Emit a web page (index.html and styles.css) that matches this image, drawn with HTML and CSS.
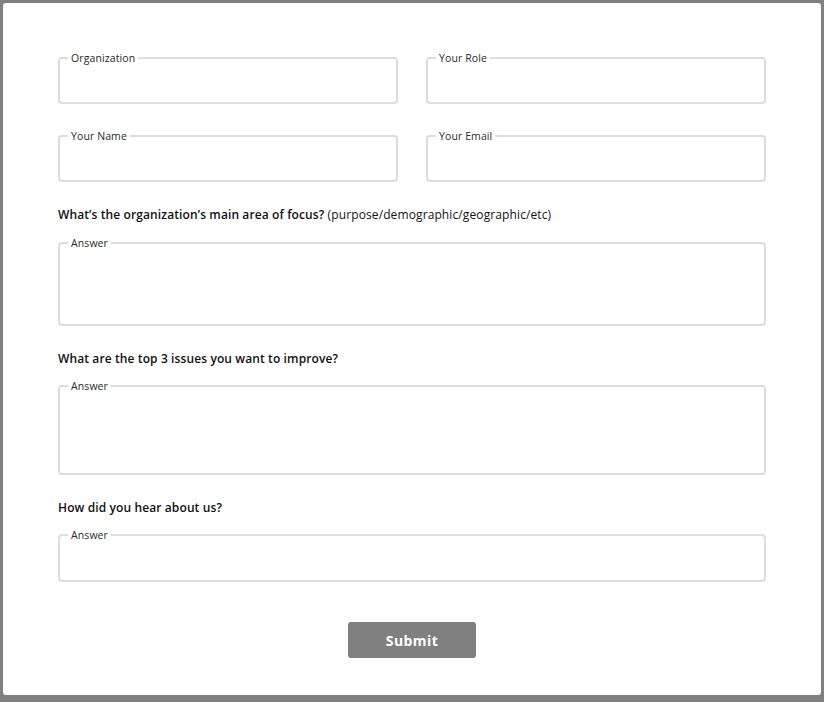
FILE: index.html
```html
<!DOCTYPE html>
<html lang="en">
<head>
<meta charset="utf-8">
<title>Contact form</title>
<link rel="stylesheet" href="styles.css">
</head>
<body>
<form class="card">
  <div class="row">
    <fieldset class="field field-short">
      <legend>Organization</legend>
      <div class="field-body"></div>
    </fieldset>
    <fieldset class="field field-short">
      <legend>Your Role</legend>
      <div class="field-body"></div>
    </fieldset>
  </div>
  <div class="row row-second">
    <fieldset class="field field-short">
      <legend>Your Name</legend>
      <div class="field-body"></div>
    </fieldset>
    <fieldset class="field field-short">
      <legend>Your Email</legend>
      <div class="field-body"></div>
    </fieldset>
  </div>

  <p class="question q-first"><strong>What’s the organization’s main area of focus?</strong> (purpose/demographic/geographic/etc)</p>
  <fieldset class="field">
    <legend>Answer</legend>
    <div class="field-body body-tall"></div>
  </fieldset>

  <p class="question"><strong>What are the top 3 issues you want to improve?</strong></p>
  <fieldset class="field">
    <legend>Answer</legend>
    <div class="field-body body-taller"></div>
  </fieldset>

  <p class="question"><strong>How did you hear about us?</strong></p>
  <fieldset class="field">
    <legend>Answer</legend>
    <div class="field-body body-last"></div>
  </fieldset>

  <div class="actions">
    <button type="button" class="submit">Submit</button>
  </div>
</form>
</body>
</html>
```
FILE: styles.css
```css
html, body {
  margin: 0;
  padding: 0;
}

body {
  background: #808080;
  padding: 3px;
  font-family: "Open Sans", "Liberation Sans", sans-serif;
  color: #222;
}

.card {
  box-sizing: border-box;
  width: 818px;
  height: 692px;
  background: #ffffff;
  border-radius: 3px;
  padding: 48px 55px 0 55px;
  display: flex;
  flex-direction: column;
}

.row {
  display: grid;
  grid-template-columns: 1fr 1fr;
  column-gap: 28px;
}

.row-second {
  margin-top: 25px;
}

.field {
  margin: 0;
  padding: 0 8px;
  min-width: 0;
  border: 2px solid #dddde0;
  border-radius: 4px;
}

.field legend {
  padding: 0 3px;
  font-size: 10.5px;
  line-height: 14px;
  letter-spacing: 0.1px;
  color: #2a2a2a;
}

.field-body {
  height: 37px;
}

.body-tall {
  height: 74px;
}

.body-taller {
  height: 80px;
}

.body-last {
  height: 38px;
}

.question {
  margin: 25px 0 12px 0;
  font-size: 12px;
  line-height: 16px;
  letter-spacing: 0.11px;
  color: #111;
}

.q-first {
  margin-top: 25px;
  margin-bottom: 13px;
}

.question strong {
  font-weight: 600;
}

.actions {
  display: flex;
  justify-content: center;
  margin-top: 40px;
}

.submit {
  width: 128px;
  height: 36px;
  border: none;
  border-radius: 3px;
  background: #808080;
  color: #ffffff;
  font-family: "Open Sans", "Liberation Sans", sans-serif;
  font-size: 14px;
  font-weight: 700;
  letter-spacing: 0.4px;
  cursor: pointer;
}
```
